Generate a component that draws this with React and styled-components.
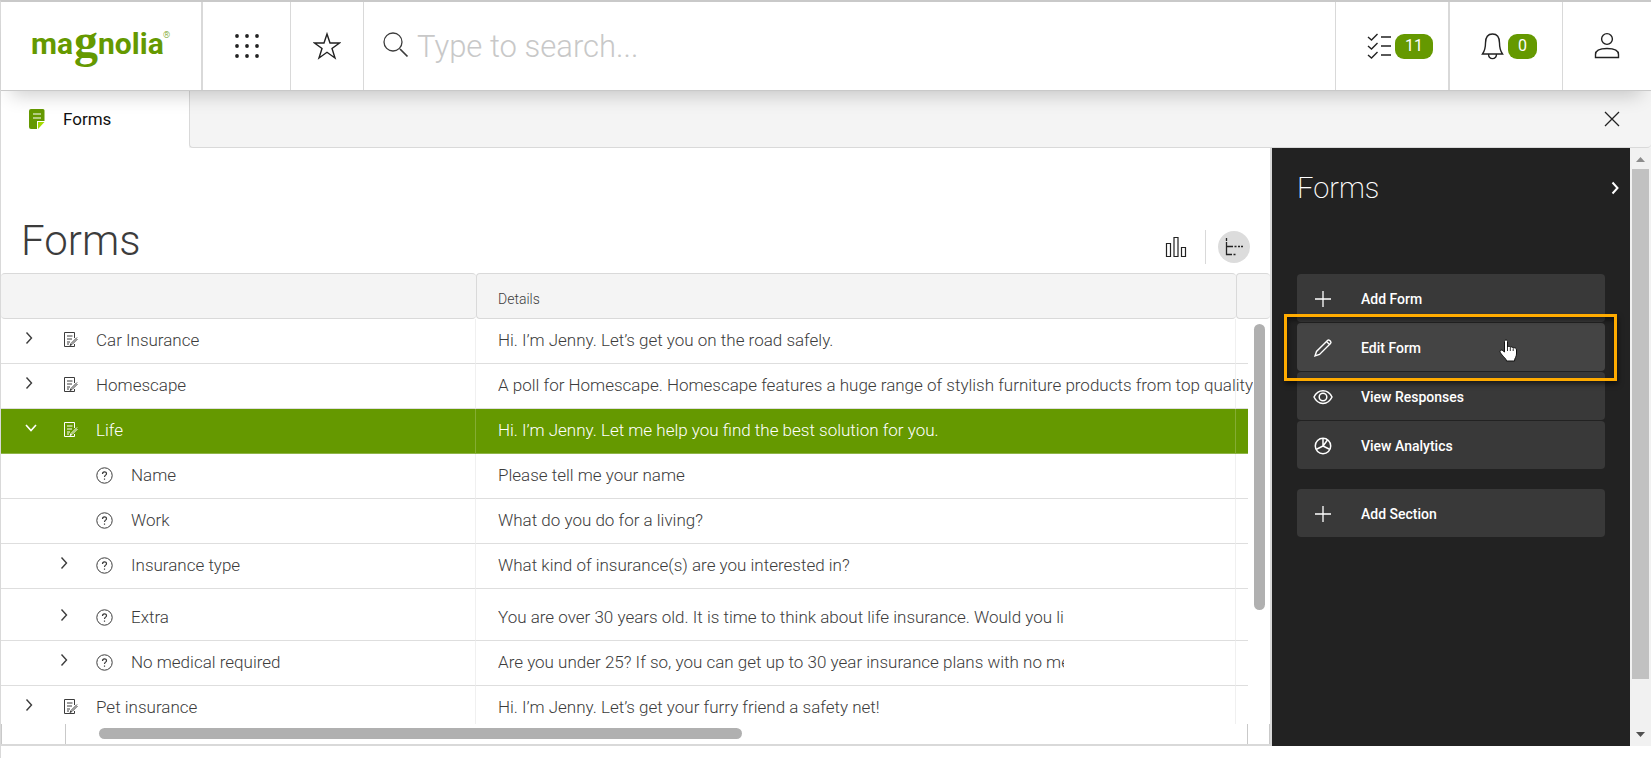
import React from "react";
import styled, { createGlobalStyle, css } from "styled-components";

const GREEN = "#659900";
const LINE = "#d9d9d9";

const GlobalStyle = createGlobalStyle`
  *, *::before, *::after { box-sizing: border-box; }
  body {
    margin: 0;
    background: #fff;
    color: #3c3c3c;
    font-family: Roboto, "Liberation Sans", sans-serif;
    font-size: 17px;
    font-weight: 300;
  }
  button, input { font: inherit; color: inherit; }
  button { border: 0; padding: 0; background: none; cursor: pointer; }
  svg { display: block; flex: none; }
`;

const Page = styled.div`
  min-height: 100vh;
  border-top: 2px solid #c9c9c9;
  border-left: 1px solid ${LINE};
`;

const Header = styled.header`
  position: relative;
  z-index: 1;
  display: flex;
  height: 89px;
  background: #fff;
  border-bottom: 1px solid #c9c9c9;
  box-shadow: 0 14px 18px -10px rgba(0, 0, 0, 0.2);
`;

const LogoLink = styled.a`
  display: flex;
  align-items: center;
  justify-content: center;
  width: 202px;
  border-right: 2px solid ${LINE};
  text-decoration: none;
`;

const HeaderButton = styled.button`
  display: flex;
  align-items: center;
  justify-content: ${(p) => (p.$start ? "flex-start" : "center")};
  width: ${(p) => p.$width}px;
  padding-left: ${(p) => (p.$start ? 31 : 0)}px;
  border-left: ${(p) => p.$line || 0}px solid ${LINE};
  gap: 4px;
  color: #222;
`;

const Badge = styled.span`
  height: 25px;
  padding: 0 10px;
  border-radius: 9px;
  background: ${GREEN};
  color: #fff;
  font-size: 16px;
  font-weight: 400;
  line-height: 24px;
`;

const Search = styled.label`
  display: flex;
  flex: 1;
  align-items: center;
  gap: 8px;
  min-width: 0;
  padding-left: 17px;
  border-left: 1px solid ${LINE};
`;

const SearchInput = styled.input`
  flex: 1;
  min-width: 0;
  height: 48px;
  padding: 0;
  border: 0;
  outline: 0;
  background: none;
  font-size: 31px;
  font-weight: 300;
  &::placeholder { color: #c8c8c8; opacity: 1; }
`;

const TabBar = styled.nav`
  display: flex;
  justify-content: space-between;
  height: 57px;
  background: #f4f4f4;
`;

const Tab = styled.button`
  display: flex;
  align-items: center;
  gap: 18px;
  width: 188px;
  padding: 0 0 2px 28px;
  background: #fff;
  color: #111;
  font-weight: 400;
`;

const TabRest = styled.div`
  display: flex;
  flex: 1;
  justify-content: flex-end;
  padding-right: 30px;
  border-left: 1px solid ${LINE};
  border-bottom: 1px solid ${LINE};
  border-radius: 0 0 4px 4px;
`;

const Workspace = styled.div`
  display: flex;
  height: 598px;
`;

const Browser = styled.main`
  display: flex;
  flex: 1;
  flex-direction: column;
  min-width: 0;
`;

const BrowserHead = styled.div`
  display: flex;
  align-items: flex-end;
  justify-content: space-between;
  height: 125px;
  padding: 0 20px 9px 20px;
`;

const Title = styled.h1`
  margin: 0;
  font-size: 42px;
  font-weight: 300;
  line-height: 46px;
`;

const ViewSwitch = styled.div`
  display: flex;
  align-items: center;
`;

const ViewButton = styled.button`
  display: flex;
  align-items: center;
  justify-content: center;
  width: 32px;
  height: 32px;
  border-radius: 50%;
  background: ${(p) => (p.$active ? "#dcdcdc" : "none")};
  color: #222;
`;

const Divider = styled.span`
  width: 1px;
  height: 34px;
  margin: 0 12px 0 13px;
  background: ${LINE};
`;

const GridArea = styled.div`
  position: relative;
  flex: 1;
  min-height: 0;
  overflow: hidden;
`;

const Table = styled.table`
  width: 100%;
  table-layout: fixed;
  border-collapse: separate;
  border-spacing: 0;
`;

const HeadCell = styled.th`
  height: 46px;
  padding: 5px 0 0 21px;
  border: 1px solid ${LINE};
  border-left-width: ${(p) => (p.$first ? 0 : 1)}px;
  border-right-width: 0;
  border-radius: 4px;
  background: #f4f4f4;
  font-size: 14px;
  font-weight: 300;
  text-align: left;
`;

const Row = styled.tr`
  height: ${(p) => (p.$tall ? 52 : 45)}px;
  ${(p) => p.$selected && css`background: ${GREEN}; color: #fff;`}
`;

const Cell = styled.td`
  padding: ${(p) => (p.$tall ? 5 : 0)}px 0 ${(p) => (p.$tall ? 0 : 2)}px;
  border-bottom: 1px solid ${(p) => (p.$selected ? "#8fb548" : "#dedede")};
  border-right: ${(p) => (p.$line ? 1 : 0)}px solid ${(p) => (p.$selected ? "#84ad33" : "#f0f0f0")};
`;

const ThumbGutter = styled.td`
  background: #fff;
`;

const NameLine = styled.div`
  display: flex;
  align-items: center;
  padding-left: ${(p) => (p.$nested ? 59 : 24)}px;
`;

const Slot = styled.span`
  display: flex;
  align-items: center;
  width: ${(p) => p.$width}px;
`;

const Toggle = styled.button`
  padding-bottom: 5px;
`;

const Details = styled.div`
  width: ${(p) => (p.$clipped ? "566px" : "auto")};
  margin-left: 22px;
  margin-right: -18px;
  overflow: hidden;
  white-space: nowrap;
`;

const VerticalThumb = styled.div`
  position: absolute;
  top: 51px;
  right: 5px;
  width: 11px;
  height: 286px;
  border-radius: 6px;
  background: #b0b0b0;
`;

const BottomBar = styled.div`
  display: flex;
  height: 22px;
  border-bottom: 2px solid ${LINE};
`;

const Corner = styled.div`
  width: ${(p) => p.$width}px;
  border-left: 1px solid #c9c9c9;
  border-right: 1px solid #c9c9c9;
`;

const Track = styled.div`
  flex: 1;
  padding: 4px 0 0 33px;
`;

const HorizontalThumb = styled.div`
  width: 56%;
  height: 11px;
  border-radius: 6px;
  background: #b0b0b0;
`;

const Panel = styled.aside`
  width: 360px;
  padding: 0 25px;
  border-left: 2px solid ${LINE};
  background: #222;
  color: #fff;
`;

const PanelHead = styled.div`
  display: flex;
  align-items: center;
  justify-content: space-between;
  height: 80px;
  margin-bottom: 46px;
  margin-right: -14px;
`;

const PanelTitle = styled.h2`
  margin: 0;
  font-size: 29px;
  font-weight: 200;
`;

const Actions = styled.div`
  display: flex;
  flex-direction: column;
  gap: 1px;
  margin-bottom: 20px;
`;

const ActionButton = styled.button`
  position: relative;
  display: flex;
  align-items: center;
  height: 48px;
  padding: 1px 0 0 16px;
  border-radius: 4px;
  background: ${(p) => (p.$active ? "#444" : "#393939")};
  color: #fff;
  font-size: 14px;
  font-weight: 500;
  text-align: left;
  z-index: ${(p) => (p.$active ? 1 : 0)};
`;

const Highlight = styled.span`
  position: absolute;
  inset: -9px -12px -10px -13px;
  border: 3px solid #ffab00;
  box-shadow: 1px 3px 5px rgba(0, 0, 0, 0.55), inset 1px 3px 5px rgba(0, 0, 0, 0.5);
`;

const Pointer = styled.span`
  position: absolute;
  top: 16px;
  right: 87px;
`;

const PageScroll = styled.div`
  display: flex;
  flex-direction: column;
  align-items: center;
  width: 21px;
  padding: 9px 0 9px;
  background: #f1f1f1;
`;

const PageThumb = styled.div`
  width: 17px;
  height: 510px;
  margin: 7px 0 auto;
  background: #c1c1c1;
`;

function Logo() {
  return (
    <svg width="140" height="56" viewBox="0 0 140 56" fill={GREEN} role="img" aria-label="magnolia">
      <text x="0" y="36" fontFamily="Roboto, sans-serif" fontSize="30" fontWeight="700">ma</text>
      <text x="43" y="39" fontFamily="Liberation Serif, serif" fontSize="48" fontWeight="700">g</text>
      <text x="67" y="36" fontFamily="Roboto, sans-serif" fontSize="30" fontWeight="700">nolia</text>
      <text x="132" y="20" fontFamily="Roboto, sans-serif" fontSize="9">®</text>
    </svg>
  );
}

function AppsIcon() {
  const at = [2, 12, 22];
  return (
    <svg width="24" height="24" fill="currentColor">
      {at.map((y) => at.map((x) => <circle key={`${x}-${y}`} cx={x} cy={y} r="1.9" />))}
    </svg>
  );
}

const Line = ({ w, h, sw = 1.4, children, ...rest }) => (
  <svg width={w} height={h} viewBox={`0 0 ${w} ${h}`} fill="none" stroke="currentColor" strokeWidth={sw} {...rest}>
    {children}
  </svg>
);

const StarIcon = () => (
  <Line w={28} h={28}>
    <path d="M14 2 L17 11 L26.500 11 L19 16.500 L22 26 L14 20.300 L6 26 L9 16.500 L1.500 11 L11 11 Z" />
  </Line>
);

const SearchIcon = () => (
  <Line w={28} h={30} sw={1.3}>
    <circle cx="12" cy="11" r="9" />
    <path d="M19 18 L26.500 25.500" strokeWidth="1.700" />
  </Line>
);

const TasksIcon = () => (
  <Line w={24} h={28}>
    {[5, 14, 23].map((y) => (
      <path key={y} d={`M1 ${y} l3.500 3 l6-6 M14 ${y} h10`} />
    ))}
  </Line>
);

const BellIcon = () => (
  <Line w={23} h={28}>
    <path d="M1.500 22 C4 18.500 4.500 16 4.500 11 C4.500 5 7 2 11.500 2 C16 2 18.500 5 18.500 11 C18.500 16 19 18.500 21.500 22 Z M7.500 22.500 C8 28 15 28 15.500 22.500" />
  </Line>
);

const UserIcon = () => (
  <Line w={26} h={28}>
    <circle cx="13" cy="7" r="5.400" />
    <path d="M1.500 25.500 V22.500 C1.500 18.500 6 16.500 13 16.500 C20 16.500 24.500 18.500 24.500 22.500 V25.500 Z" />
  </Line>
);

const TabIcon = () => (
  <svg width="16" height="20" viewBox="0 0 16 20">
    <path d="M2 0 H14 Q15.500 0 15.500 1.500 V12 H8 V20 H2 Q0 20 0 18 V2 Q0 0 2 0 Z" fill={GREEN} />
    <path d="M9 20 V13 H15.500 Z" fill="#a5dc00" />
    <path d="M4 5 H12 M4 9 H12" stroke="#fff" strokeWidth="1.200" />
  </svg>
);

const CloseIcon = () => (
  <Line w={16} h={16} sw={1.3}>
    <path d="M1 1 L15 15 M15 1 L1 15" />
  </Line>
);

const ChartIcon = () => (
  <Line w={22} h={22} sw={1.2}>
    <path d="M1.500 7.500 h4 v13 h-4 Z M9 1.500 h4 v19 h-4 Z M16.500 11.500 h4 v9 h-4 Z" />
  </Line>
);

const TreeIcon = () => (
  <Line w={18} h={18} sw={1.3}>
    <path d="M1.500 0 V3 M1.500 4 V16.500 H7 M8.500 16.500 h2 M2 8.500 H8 M9.500 8.500 h2 M13 8.500 h2 M16 8.500 h2" />
  </Line>
);

const ChevronRight = ({ bold }) => (
  <Line w={8} h={14} sw={bold ? 2 : 1.4}>
    <path d="M1.500 1.500 L6.500 7 L1.500 12.500" />
  </Line>
);

const ChevronDown = () => (
  <Line w={12} h={8} sw={1.6}>
    <path d="M1 1 L6 6.500 L11 1" />
  </Line>
);

const FormIcon = () => (
  <Line w={14} h={16} sw={1}>
    <path d="M10.500 6 V.5 H.5 V14.500 H10.500 V12 M3 4 H8.500 M3 7 H8 M3 10 H6 M3 12 H5" />
    <path d="M13 5.500 L7 11.500 L6 13.500 L8 12.500 L13.500 7" />
  </Line>
);

const QuestionIcon = () => (
  <Line w={17} h={17} sw={1}>
    <circle cx="8.500" cy="8.500" r="7.700" />
    <path d="M6.500 7 C6.500 4.200 10.500 4.200 10.500 6.700 C10.500 8.300 8.500 8 8.500 10 M8.500 11.500 V12.800" strokeWidth="1.200" />
  </Line>
);

const PlusIcon = () => (
  <Line w={20} h={20} sw={1.3}>
    <path d="M2 10 H18 M10 2 V18" />
  </Line>
);

const PencilIcon = () => (
  <Line w={20} h={20} sw={1.4}>
    <path d="M2 18 L3.500 13.500 L14.500 2.500 Q15.500 1.500 16.700 2.500 L17.500 3.300 Q18.500 4.500 17.500 5.500 L6.500 16.500 Z M13.500 3.500 L16.500 6.500" />
  </Line>
);

const EyeIcon = () => (
  <Line w={20} h={16} sw={1.5}>
    <path d="M1 8 C5 -.5 15 -.5 19 8 C15 16.500 5 16.500 1 8 Z" />
    <circle cx="10" cy="8" r="3.800" />
  </Line>
);

const PieIcon = () => (
  <Line w={20} h={20} sw={1.5}>
    <circle cx="10" cy="10" r="7.700" />
    <path d="M10 2.500 V10 L3 13.500 M10 10 L17 13.500 M10 10 L14.500 4" />
  </Line>
);

const HandIcon = () => (
  <svg width="19" height="24" viewBox="0 0 19 24">
    <path
      d="M5.500 2.500 C5.500 .5 8.500 .5 8.500 2.500 V8 C9.500 7 11 7.200 11.300 8.300 C12.300 7.500 13.800 8 14 9 C15.500 8.300 17.500 9 17.500 11 V15 C17.500 18 15.500 19 15.500 22 H7.500 C7.500 19.500 1.500 15.500 1 12.500 C1 11 3 10.500 4 11.800 L5.500 13 Z"
      fill="#fff" stroke="#111"
    />
    <path d="M8.500 8 V12 M11.300 8.500 V12 M14.200 9.500 V12" stroke="#333" />
  </svg>
);

const rows = [
  { name: "Car Insurance", details: "Hi. I’m Jenny. Let’s get you on the road safely.", toggle: true },
  { name: "Homescape", details: "A poll for Homescape. Homescape features a huge range of stylish furniture products from top quality", toggle: true },
  { name: "Life", details: "Hi. I’m Jenny. Let me help you find the best solution for you.", toggle: true, selected: true },
  { name: "Name", details: "Please tell me your name", nested: true },
  { name: "Work", details: "What do you do for a living?", nested: true },
  { name: "Insurance type", details: "What kind of insurance(s) are you interested in?", nested: true, toggle: true },
  { name: "Extra", details: "You are over 30 years old. It is time to think about life insurance. Would you like", nested: true, toggle: true, tall: true, clipped: true },
  { name: "No medical required", details: "Are you under 25? If so, you can get up to 30 year insurance plans with no medical", nested: true, toggle: true, clipped: true },
  { name: "Pet insurance", details: "Hi. I’m Jenny. Let’s get your furry friend a safety net!", toggle: true },
];

function FormRow({ name, details, nested, toggle, selected, tall, clipped }) {
  return (
    <Row $tall={tall} $selected={selected}>
      <Cell $tall={tall} $selected={selected} $line>
        <NameLine $nested={nested}>
          <Slot $width={nested ? 36 : 39}>
            {toggle && (
              <Toggle aria-label={`Toggle ${name}`} aria-expanded={!!selected}>
                {selected ? <ChevronDown /> : <ChevronRight />}
              </Toggle>
            )}
          </Slot>
          <Slot $width={nested ? 35 : 32}>{nested ? <QuestionIcon /> : <FormIcon />}</Slot>
          {name}
        </NameLine>
      </Cell>
      <Cell $tall={tall} $selected={selected} $line>
        <Details $clipped={clipped}>{details}</Details>
      </Cell>
      <Cell $selected={selected} />
      <ThumbGutter />
    </Row>
  );
}

function Action({ icon, label, active, children }) {
  return (
    <ActionButton $active={active}>
      <Slot $width={48}>{icon}</Slot>
      {label}
      {children}
    </ActionButton>
  );
}

export default function App() {
  return (
    <>
      <GlobalStyle />
      <Page>
        <Header>
          <LogoLink href="#"><Logo /></LogoLink>
          <HeaderButton $width={87} aria-label="Apps"><AppsIcon /></HeaderButton>
          <HeaderButton $width={73} $line={1} aria-label="Favorites"><StarIcon /></HeaderButton>
          <Search>
            <SearchIcon />
            <SearchInput type="text" aria-label="Search" placeholder="Type to search..." />
          </Search>
          <HeaderButton $width={113} $line={1} $start aria-label="Tasks">
            <TasksIcon /><Badge>11</Badge>
          </HeaderButton>
          <HeaderButton $width={114} $line={2} $start aria-label="Notifications">
            <BellIcon /><Badge>0</Badge>
          </HeaderButton>
          <HeaderButton $width={89} $line={1} aria-label="Account"><UserIcon /></HeaderButton>
        </Header>
        <TabBar>
          <Tab><TabIcon />Forms</Tab>
          <TabRest><HeaderButton $width={18} aria-label="Close"><CloseIcon /></HeaderButton></TabRest>
        </TabBar>
        <Workspace>
          <Browser>
            <BrowserHead>
              <Title>Forms</Title>
              <ViewSwitch>
                <ViewButton aria-label="Statistics"><ChartIcon /></ViewButton>
                <Divider />
                <ViewButton $active aria-label="Tree view"><TreeIcon /></ViewButton>
              </ViewSwitch>
            </BrowserHead>
            <GridArea>
              <Table>
                <colgroup>
                  <col style={{ width: 475 }} />
                  <col />
                  <col style={{ width: 12 }} />
                  <col style={{ width: 22 }} />
                </colgroup>
                <thead>
                  <tr>
                    <HeadCell $first aria-label="Name" />
                    <HeadCell>Details</HeadCell>
                    <HeadCell colSpan={2} aria-label="Options" />
                  </tr>
                </thead>
                <tbody>
                  {rows.map((row) => <FormRow key={row.name} {...row} />)}
                </tbody>
              </Table>
              <VerticalThumb />
            </GridArea>
            <BottomBar>
              <Corner $width={65} />
              <Track><HorizontalThumb /></Track>
              <Corner $width={23} />
            </BottomBar>
          </Browser>
          <Panel>
            <PanelHead>
              <PanelTitle>Forms</PanelTitle>
              <button aria-label="Collapse panel"><ChevronRight bold /></button>
            </PanelHead>
            <Actions>
              <Action icon={<PlusIcon />} label="Add Form" />
              <Action icon={<PencilIcon />} label="Edit Form" active>
                <Highlight />
                <Pointer><HandIcon /></Pointer>
              </Action>
              <Action icon={<EyeIcon />} label="View Responses" />
              <Action icon={<PieIcon />} label="View Analytics" />
            </Actions>
            <Actions>
              <Action icon={<PlusIcon />} label="Add Section" />
            </Actions>
          </Panel>
          <PageScroll>
            <svg width="9" height="5" fill="#8c8c8c"><path d="M0 5 L4.500 0 L9 5 Z" /></svg>
            <PageThumb />
            <svg width="9" height="5" fill="#505050"><path d="M0 0 L4.500 5 L9 0 Z" /></svg>
          </PageScroll>
        </Workspace>
      </Page>
    </>
  );
}
